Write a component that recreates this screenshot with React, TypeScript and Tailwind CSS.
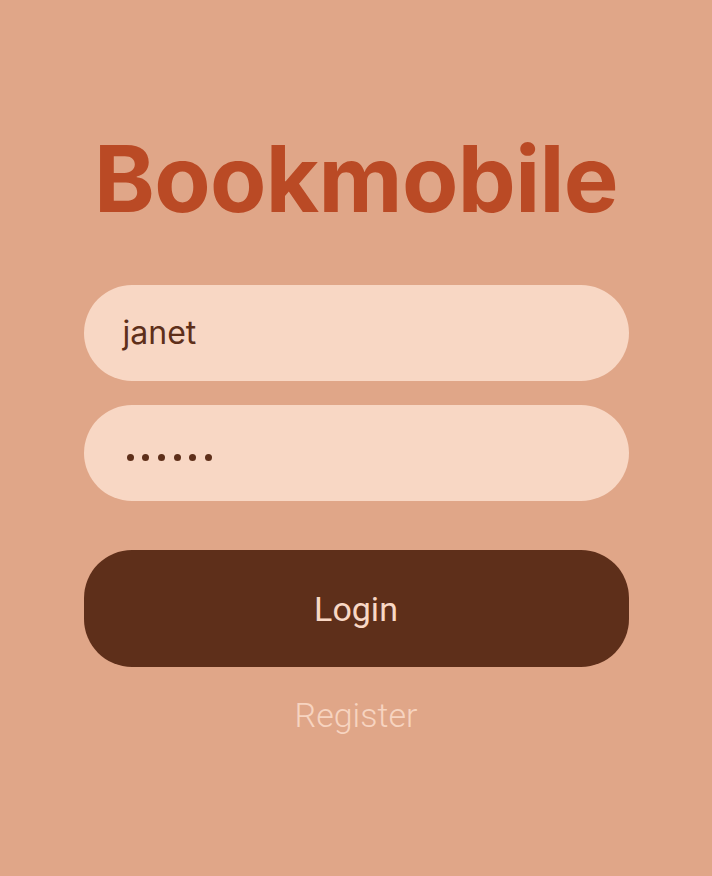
import React from "react";

const Login = () => {
  return (
    <div className="min-h-[876px] w-full bg-[#E0A688] flex flex-col items-center pt-[133px]">
      {/* title */}
      <h1 className="font-['Inter',sans-serif] font-bold text-[92px] leading-none tracking-[-0.6px] text-[#BA4A25]">
        Bookmobile
      </h1>

      <div className="w-[545px] mt-[60px] flex flex-col">
        {/* username */}
        <div className="h-[96px] rounded-full bg-[#F8D7C4] flex items-center pl-[39px]">
          <span className="font-['Inter',sans-serif] text-[32px] leading-none text-[#5E2F1A]">
            janet
          </span>
        </div>

        {/* password */}
        <div className="h-[96px] mt-[24px] rounded-full bg-[#F8D7C4] flex items-center pl-[43px] pt-[8px]">
          <div className="flex gap-[8.7px]">
            {[0, 1, 2, 3, 4, 5].map((i) => (
              <span key={i} className="block w-[7px] h-[7px] rounded-full bg-[#5E2F1A]" />
            ))}
          </div>
        </div>

        {/* login */}
        <button className="h-[117px] mt-[49px] rounded-[48px] bg-[#5E2F1A] flex items-center justify-center font-['Roboto',sans-serif] text-[34px] leading-none text-[#F9D8C5]">
          Login
        </button>

        {/* register */}
        <div className="mt-[31px] text-center font-['Roboto',sans-serif] font-light text-[34px] leading-none text-[#F7D4C0]">
          Register
        </div>
      </div>
    </div>
  );
};

export default function App() {
  return <Login />;
}
